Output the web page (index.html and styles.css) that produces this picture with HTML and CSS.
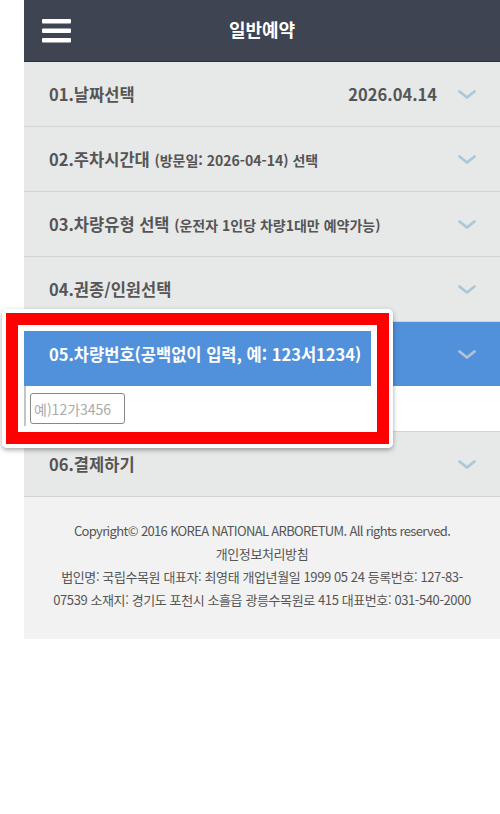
FILE: index.html
```html
<!DOCTYPE html>
<html lang="ko">
  <head>
    <meta charset="UTF-8" />
    <meta name="viewport" content="width=device-width, initial-scale=1.0" />
    <title>일반예약</title>
    <link rel="stylesheet" href="styles.css">
  </head>
  <body>
    <div class="page">
      <header class="topbar">
        <button class="menu-btn" type="button" aria-label="메뉴">
          <svg width="29" height="24" viewBox="0 0 29 24">
            <rect x="0" y="0" width="29" height="4.5" rx="1" fill="#fff" />
            <rect x="0" y="9.5" width="29" height="4.5" rx="1" fill="#fff" />
            <rect x="0" y="19" width="29" height="4.5" rx="1" fill="#fff" />
          </svg>
        </button>
        <h1 class="topbar-title">일반예약</h1>
        <span></span>
      </header>

      <ul class="steps">
        <li class="step">
          <div class="step-head">
            <span class="step-title">01.날짜선택</span>
            <span class="step-value">2026.04.14</span>
            <svg class="chev" width="18" height="9" viewBox="0 0 18 9"><path d="M1.5 1.5 L9 7.5 L16.5 1.5" /></svg>
          </div>
        </li>
        <li class="step">
          <div class="step-head">
            <span class="step-title">02.주차시간대 <small>(방문일: 2026-04-14) 선택</small></span>
            <svg class="chev" width="18" height="9" viewBox="0 0 18 9"><path d="M1.5 1.5 L9 7.5 L16.5 1.5" /></svg>
          </div>
        </li>
        <li class="step">
          <div class="step-head">
            <span class="step-title">03.차량유형 선택 <small>(운전자 1인당 차량1대만 예약가능)</small></span>
            <svg class="chev" width="18" height="9" viewBox="0 0 18 9"><path d="M1.5 1.5 L9 7.5 L16.5 1.5" /></svg>
          </div>
        </li>
        <li class="step">
          <div class="step-head">
            <span class="step-title">04.권종/인원선택</span>
            <svg class="chev" width="18" height="9" viewBox="0 0 18 9"><path d="M1.5 1.5 L9 7.5 L16.5 1.5" /></svg>
          </div>
        </li>
        <li class="step is-open">
          <div class="step-head">
            <span class="step-title">05.차량번호(공백없이 입력, 예: 123서1234)</span>
            <svg class="chev" width="18" height="9" viewBox="0 0 18 9"><path d="M1.5 1.5 L9 7.5 L16.5 1.5" /></svg>
          </div>
          <div class="step-body">
            <input class="car-no" type="text" placeholder="예)12가3456" />
          </div>
        </li>
        <li class="step">
          <div class="step-head">
            <span class="step-title">06.결제하기</span>
            <svg class="chev" width="18" height="9" viewBox="0 0 18 9"><path d="M1.5 1.5 L9 7.5 L16.5 1.5" /></svg>
          </div>
        </li>
      </ul>

      <footer class="footer">
        <p class="copy">Copyright&copy; 2016 KOREA NATIONAL ARBORETUM. All rights reserved.</p>
        <p>개인정보처리방침</p>
        <p>법인명: 국립수목원 대표자: 최영태 개업년월일 1999 05 24 등록번호: 127-83-<br>07539 소재지: 경기도 포천시 소흘읍 광릉수목원로 415 대표번호: 031-540-2000</p>
      </footer>
    </div>

    <!-- highlight frame over step 05 -->
    <div class="callout"></div>
  </body>
</html>
```

FILE: styles.css
```css
body {
  margin: 0;
  font-family: "Noto Sans CJK KR", "Noto Sans", sans-serif;
  background: #fff;
  color: #555;
}

.page {
  margin-left: 24px;
  width: 476px;
}

/* top bar */
.topbar {
  height: 61px;
  background: #3e4451;
  border-bottom: 1px solid #2a2e37;
  display: grid;
  grid-template-columns: 1fr auto 1fr;
  align-items: center;
}

.menu-btn {
  justify-self: start;
  margin-left: 18px;
  padding: 0;
  border: 0;
  background: none;
  display: flex;
}

.topbar-title {
  margin: 0 0 4px;
  font-size: 18px;
  font-weight: bold;
  color: #fff;
  line-height: 24px;
}

/* steps */
.steps {
  list-style: none;
  margin: 0;
  padding: 0;
}

.step {
  border-bottom: 1px solid #d2d3d3;
}

.step-head {
  height: 64px;
  background: #e7e8e8;
  display: flex;
  align-items: center;
  padding: 0 24px 0 25px;
}

.step-title {
  flex: 1;
  font-size: 16.5px;
  font-weight: bold;
  color: #555;
  line-height: 20px;
  white-space: nowrap;
}

.step-title small {
  font-size: 14px;
}

.step-value {
  font-size: 16.5px;
  font-weight: bold;
  color: #555;
  margin-right: 21px;
}

.chev path {
  fill: none;
  stroke: #a9c8d8;
  stroke-width: 2.8;
  stroke-linecap: round;
  stroke-linejoin: round;
}

.is-open .step-head {
  background: #5190da;
}

.is-open .step-title {
  color: #fff;
}

.is-open .chev path {
  stroke: #b4c3cf;
}

.step-body {
  background: #fff;
  height: 45px;
  box-sizing: border-box;
  padding: 7px 4px;
  border-left: 2px solid #c4c4c4;
  display: flex;
  align-items: flex-start;
}

.car-no {
  width: 95px;
  height: 31px;
  box-sizing: border-box;
  border: 1px solid #888;
  border-radius: 3px;
  padding: 0 3px;
  font-family: inherit;
  font-size: 14px;
  color: #555;
}

.car-no::placeholder {
  color: #aaa;
}

/* footer */
.footer {
  background: #f2f2f2;
  padding: 22px 10px 28px;
  text-align: center;
  font-size: 13px;
  line-height: 23px;
  color: #555;
  letter-spacing: -0.4px;
}

.footer p {
  margin: 0;
}

.footer .copy {
  letter-spacing: -0.65px;
}

/* red highlight frame */
.callout {
  position: absolute;
  left: 2px;
  top: 309px;
  width: 391px;
  height: 139px;
  box-sizing: border-box;
  border: 4px solid #fff;
  border-radius: 5px;
  box-shadow: 0 2px 5px rgba(0, 0, 0, 0.35);
}

.callout::before {
  content: "";
  position: absolute;
  inset: 0;
  border: 12px solid #f00;
}

.callout::after {
  content: "";
  position: absolute;
  inset: 12px;
  border: 6px solid #fff;
}
```
